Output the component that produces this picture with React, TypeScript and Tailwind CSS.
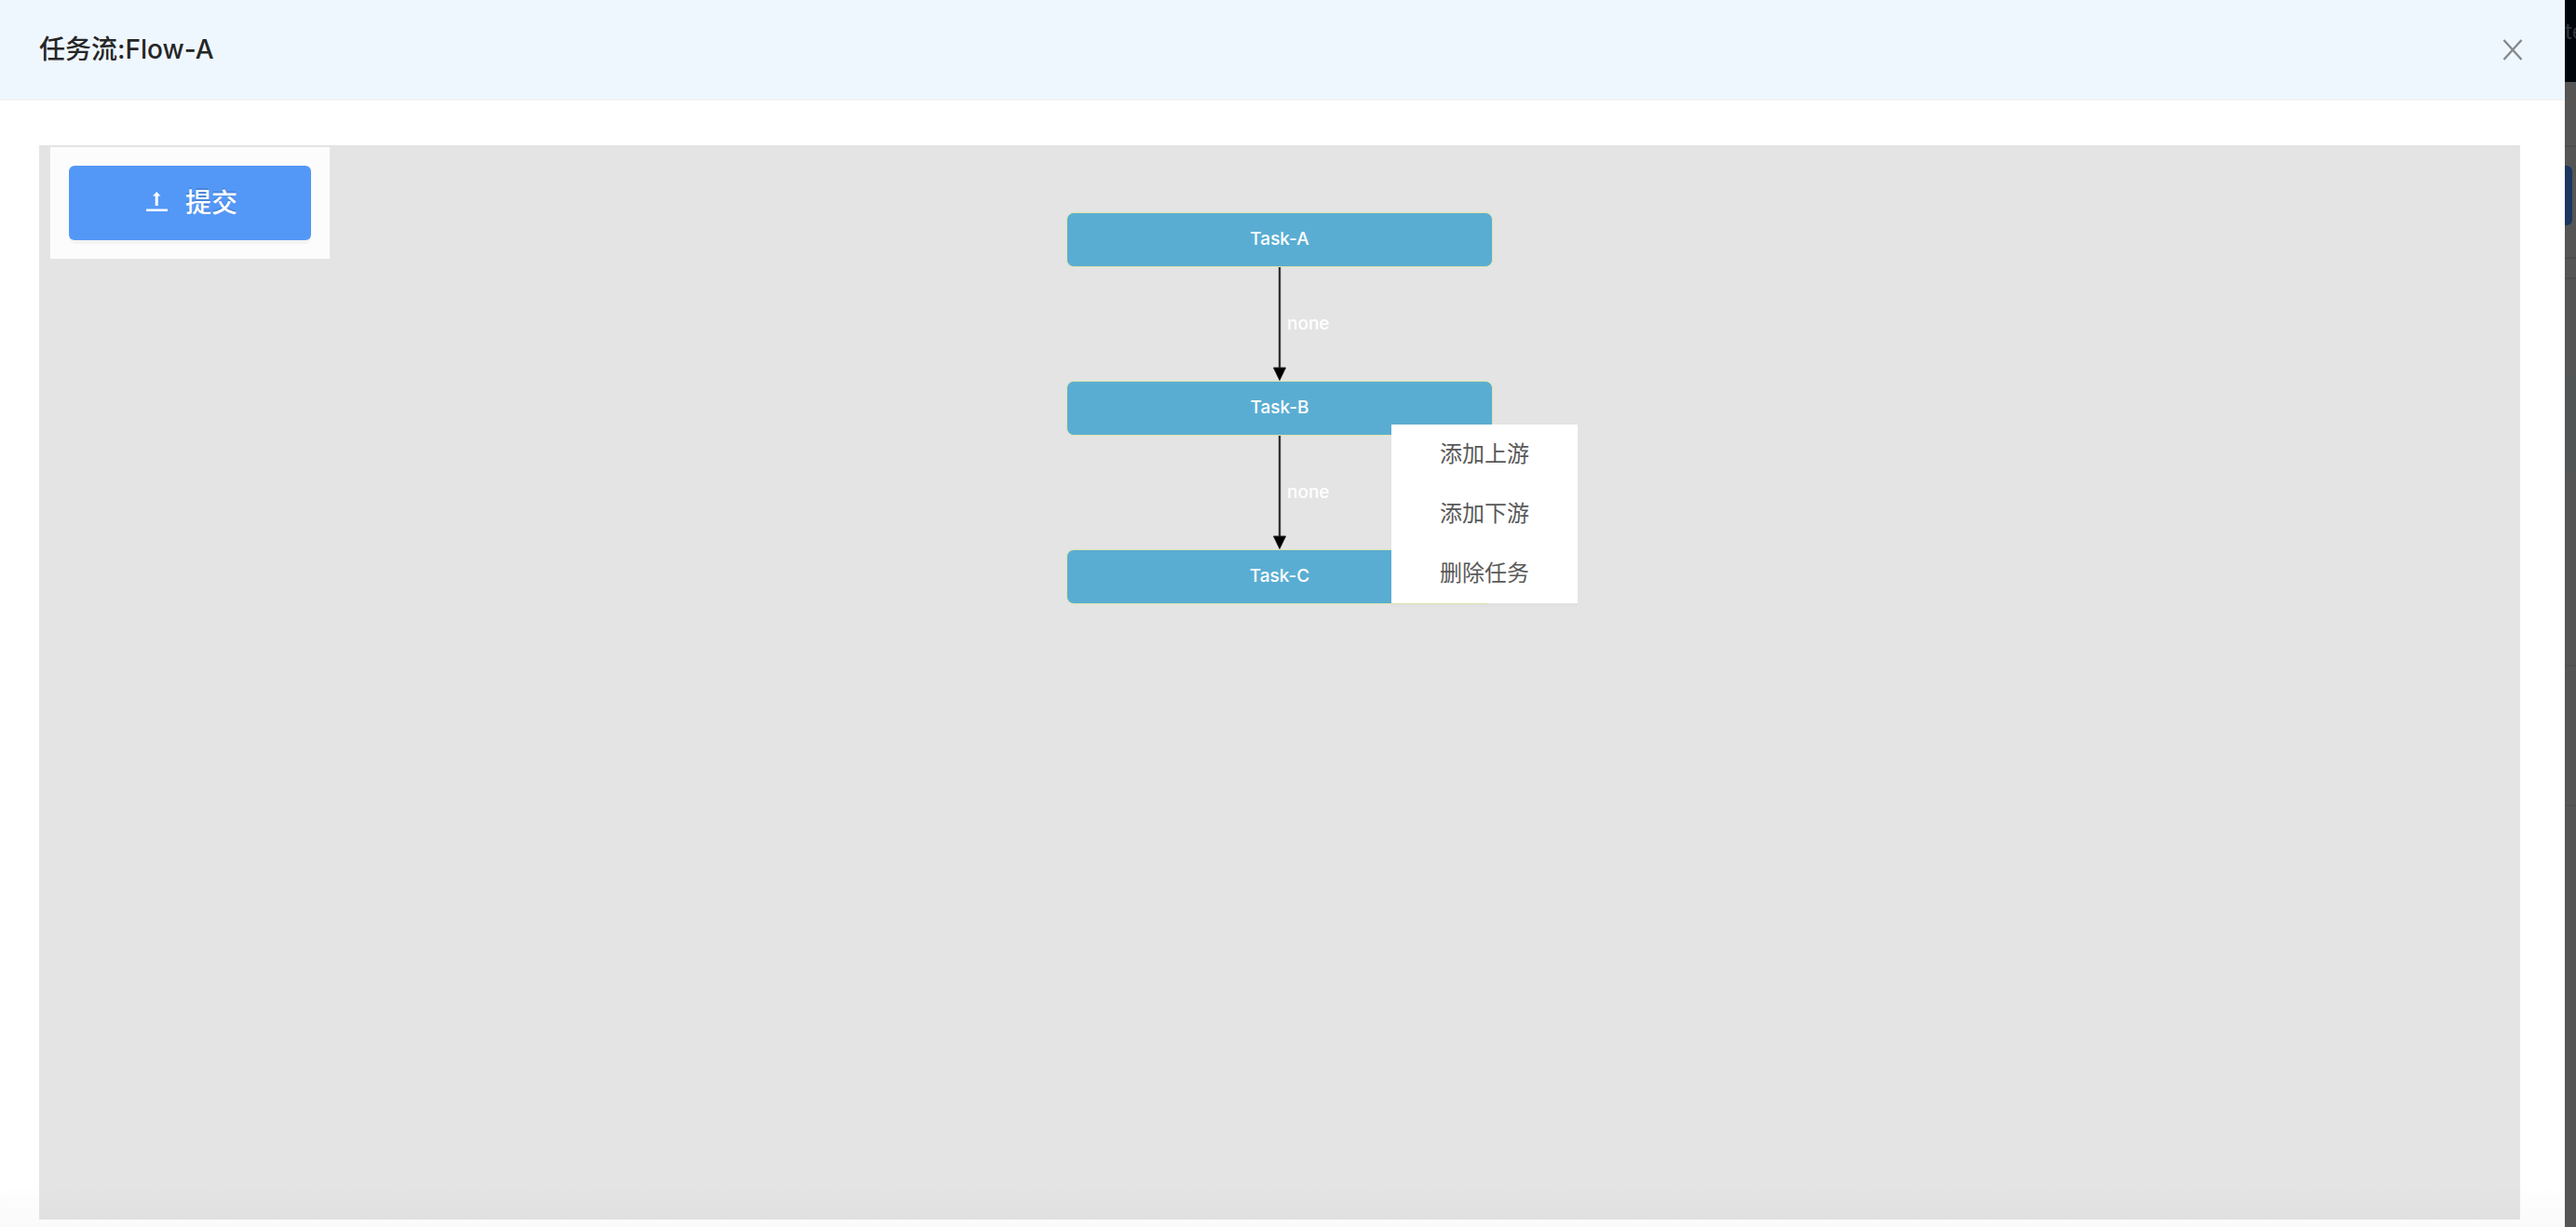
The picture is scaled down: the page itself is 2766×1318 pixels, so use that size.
const tasks = ["Task-A", "Task-B", "Task-C"];
const menuItems = ["添加上游", "添加下游", "删除任务"];

function Edge() {
  return (
    <div className="relative flex h-[122px] justify-center">
      <svg width="16" height="122" viewBox="0 0 16 122" aria-hidden="true">
        <path d="M8 0V110" stroke="#333" strokeWidth="2.4" />
        <path d="M1.500 108H14.500L8 121.500Z" fill="#000" stroke="#222" strokeWidth="1" />
      </svg>
      <span className="absolute top-[49px] left-1/2 ml-2 text-[19px] leading-6 font-medium text-white">none</span>
    </div>
  );
}

function Backdrop() {
  return (
    <div className="w-3 shrink-0 overflow-hidden bg-[#555]" aria-hidden="true">
      <div className="h-[88px] bg-[#00050c] pt-4 text-2xl leading-9 text-[#303438]">te</div>
      <div className="h-[70px] border-b-2 border-[#4d4d4d]" />
      <div className="mt-5 mr-1 h-16 rounded-r-md bg-[#1c3760]" />
      <div className="mt-[34px] h-6 border-y-2 border-[#4d4d4d]" />
      <div className="mt-[104px] h-[102px] bg-[#505656]" />
      <div className="mt-[208px] h-[152px] border-y-2 border-[#505050]" />
    </div>
  );
}

export default function App() {
  return (
    <div className="flex h-screen overflow-hidden bg-[#555] font-['Inter','Noto_Sans_CJK_SC',sans-serif]">
      <section className="relative flex min-w-0 flex-1 flex-col bg-white" role="dialog" aria-labelledby="title">
        <header className="flex h-[108px] shrink-0 items-center justify-between border-b-2 border-[#f3f3f3] bg-[#eff7fe] pr-[45px] pl-[42px]">
          <h1 id="title" className="text-[28px] leading-10 font-medium text-[#262626]">任务流:Flow-A</h1>
          <button type="button" aria-label="关闭" className="text-[#85898c]">
            <svg width="22" height="24" viewBox="0 0 22 24" fill="none" stroke="currentColor" strokeWidth="2.4">
              <path d="M1.500 2L20.500 23M20.500 2L1.500 23" />
            </svg>
          </button>
        </header>
        <main className="flex flex-1 flex-col pt-12 pr-12 pb-2 pl-[42px]">
          <div className="relative flex-1 bg-[#e4e4e4]">
            <div className="absolute top-0.5 left-3 bg-[#fcfcfc] p-5">
              <button
                type="button"
                className="flex h-20 w-[260px] items-center justify-center gap-[18px] rounded-md bg-[#5498f7] pl-1 text-[28px] font-medium text-white shadow-[0_4px_0_rgba(0,0,0,0.03)] [text-shadow:0_-2px_0_rgba(0,0,0,0.12)]"
              >
                <svg width="24" height="24" viewBox="0 0 24 24" fill="currentColor" aria-hidden="true">
                  <path d="M0 18.500H23V21H0ZM9.700 15V4.500H7L11.200 0L15.400 4.500H12.700V15Z" />
                </svg>
                提交
              </button>
            </div>
            <div className="mx-auto w-[458px] pt-[72px]">
              {tasks.map((task, i) => (
                <div key={task}>
                  {i > 0 && <Edge />}
                  <div className="flex h-[59px] items-center justify-center rounded-lg border border-[#dde4ae] bg-[#5aadd2] text-[19px] font-medium text-white">
                    {task}
                  </div>
                </div>
              ))}
            </div>
            <div role="menu" className="absolute top-[300px] left-1/2 ml-[120px] flex w-[200px] flex-col bg-white shadow-[0_4px_0_rgba(0,0,0,0.01)]">
              {menuItems.map((item) => (
                <button key={item} type="button" role="menuitem" className="h-16 text-2xl text-[#595959]">
                  {item}
                </button>
              ))}
            </div>
          </div>
        </main>
        <div className="pointer-events-none absolute inset-x-0 bottom-0 h-12 bg-linear-to-b from-transparent to-black/2" />
      </section>
      <Backdrop />
    </div>
  );
}
